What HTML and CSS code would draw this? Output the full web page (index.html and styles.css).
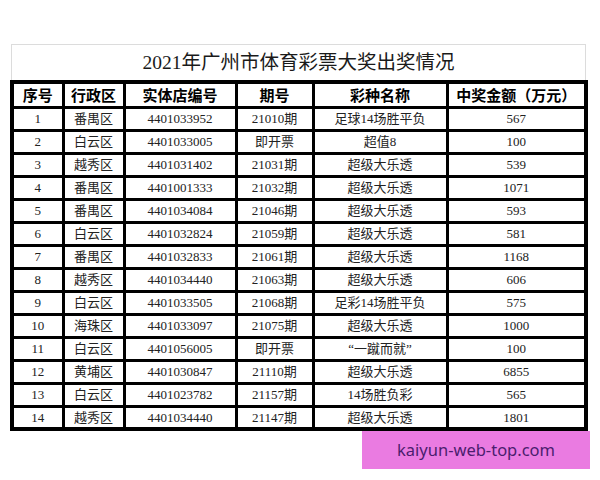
FILE: index.html
```html
<!DOCTYPE html>
<html lang="zh-CN">
<head>
<meta charset="utf-8">
<title>2021年广州市体育彩票大奖出奖情况</title>
<link rel="stylesheet" href="styles.css">
</head>
<body>
<div class="page">
  <div class="title">2021年广州市体育彩票大奖出奖情况</div>
  <table class="grid">
    <colgroup>
      <col class="c1"><col class="c2"><col class="c3"><col class="c4"><col class="c5"><col class="c6">
    </colgroup>
    <thead>
      <tr><th>序号</th><th>行政区</th><th>实体店编号</th><th>期号</th><th>彩种名称</th><th>中奖金额（万元）</th></tr>
    </thead>
    <tbody>
      <tr><td>1</td><td>番禺区</td><td>4401033952</td><td>21010期</td><td>足球14场胜平负</td><td>567</td></tr>
      <tr><td>2</td><td>白云区</td><td>4401033005</td><td>即开票</td><td>超值8</td><td>100</td></tr>
      <tr><td>3</td><td>越秀区</td><td>4401031402</td><td>21031期</td><td>超级大乐透</td><td>539</td></tr>
      <tr><td>4</td><td>番禺区</td><td>4401001333</td><td>21032期</td><td>超级大乐透</td><td>1071</td></tr>
      <tr><td>5</td><td>番禺区</td><td>4401034084</td><td>21046期</td><td>超级大乐透</td><td>593</td></tr>
      <tr><td>6</td><td>白云区</td><td>4401032824</td><td>21059期</td><td>超级大乐透</td><td>581</td></tr>
      <tr><td>7</td><td>番禺区</td><td>4401032833</td><td>21061期</td><td>超级大乐透</td><td>1168</td></tr>
      <tr><td>8</td><td>越秀区</td><td>4401034440</td><td>21063期</td><td>超级大乐透</td><td>606</td></tr>
      <tr><td>9</td><td>白云区</td><td>4401033505</td><td>21068期</td><td>足彩14场胜平负</td><td>575</td></tr>
      <tr><td>10</td><td>海珠区</td><td>4401033097</td><td>21075期</td><td>超级大乐透</td><td>1000</td></tr>
      <tr><td>11</td><td>白云区</td><td>4401056005</td><td>即开票</td><td>“一蹴而就”</td><td>100</td></tr>
      <tr><td>12</td><td>黄埔区</td><td>4401030847</td><td>21110期</td><td>超级大乐透</td><td>6855</td></tr>
      <tr><td>13</td><td>白云区</td><td>4401023782</td><td>21157期</td><td>14场胜负彩</td><td>565</td></tr>
      <tr><td>14</td><td>越秀区</td><td>4401034440</td><td>21147期</td><td>超级大乐透</td><td>1801</td></tr>
    </tbody>
  </table>
  <div class="watermark">kaiyun-web-top.com</div>
</div>
</body>
</html>
```

FILE: styles.css
```css
* { box-sizing: border-box; }
html, body { margin: 0; padding: 0; background: #fff; }
body { width: 600px; height: 480px; overflow: hidden; }

.page {
  position: relative;
  width: 600px;
  height: 480px;
  padding-top: 44px;
  padding-left: 11px;
}

.title {
  width: 575px;
  height: 36px;
  border: 1px solid #dcdcdc;
  border-bottom: none;
  text-align: center;
  font-family: "Liberation Serif", "Noto Sans CJK SC", serif;
  font-size: 19.5px;
  line-height: 36px;
  color: #1a1a1a;
}

.grid {
  border-collapse: collapse;
  table-layout: fixed;
  width: 576px;
  margin-left: -1px;
  border: 4px solid #000;
}

.c1 { width: 51px; }
.c2 { width: 61px; }
.c3 { width: 112px; }
.c4 { width: 77px; }
.c5 { width: 134px; }
.c6 { width: 139px; }

.grid th, .grid td {
  border: 3px solid #000;
  padding: 0;
  text-align: center;
  white-space: nowrap;
  overflow: hidden;
}

.grid th {
  height: 25px;
  font-family: "Noto Sans CJK SC", sans-serif;
  font-weight: 700;
  font-size: 15px;
  color: #000;
  line-height: 19px;
}

.grid td {
  height: 23px;
  font-family: "Liberation Serif", "Noto Sans CJK SC", serif;
  font-size: 13px;
  color: #222;
  line-height: 17px;
}

.watermark {
  position: absolute;
  left: 362px;
  top: 431px;
  width: 228px;
  height: 38px;
  background: #ea7be1;
  color: #4b1d6e;
  font-family: "Noto Sans", "DejaVu Sans", sans-serif;
  font-size: 16.5px;
  line-height: 38px;
  padding-left: 35px;
}
```
